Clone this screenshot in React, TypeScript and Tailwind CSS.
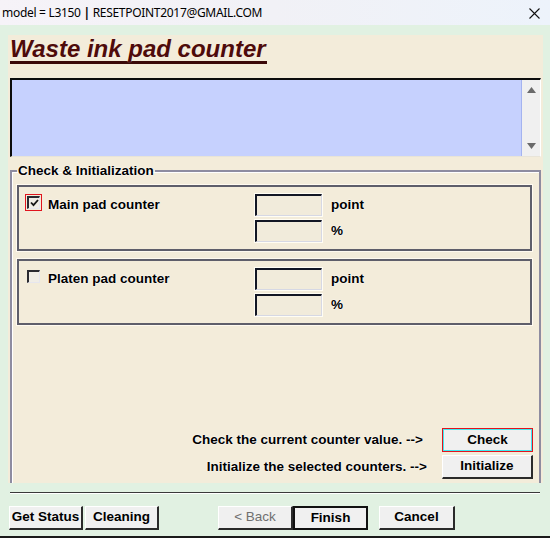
import type { ReactNode } from "react";

const glow = "[text-shadow:0_0_1px_#fff,0_0_2px_#fff]";

function TitleBar() {
  return (
    <div className="flex h-[25px] items-center justify-between bg-gradient-to-r from-[#f6f3f8] via-[#f1f1f6] to-[#edf3fb] pl-[2px] pr-[10px]">
      <span className="font-['Noto_Sans',sans-serif] text-[12px] leading-none tracking-[-0.3px] text-black">
        model = L3150 <b className="font-bold">|</b> RESETPOINT2017@GMAIL.COM
      </span>
      <svg width="11" height="11" viewBox="0 0 11 11" className="mt-[1px]">
        <path d="M0.5 0.5 L10.5 10.5 M10.5 0.5 L0.5 10.5" stroke="#111" strokeWidth="1.1" />
      </svg>
    </div>
  );
}

function Checkbox({ checked, focused }: { checked?: boolean; focused?: boolean }) {
  return (
    <div className={`flex h-[17px] w-[17px] items-center justify-center ${focused ? "border border-[#e0141e]" : "border border-transparent"}`}>
      <div className="flex h-[13px] w-[13px] items-center justify-center border-t-2 border-l-2 border-t-[#2a2a30] border-l-[#2a2a30] border-b border-r border-b-[#e6e6ee] border-r-[#e6e6ee] bg-[#f0ede6]">
        {checked && (
          <svg width="9" height="8" viewBox="0 0 9 8">
            <path d="M1 3.5 L3.5 6.2 L8 1" fill="none" stroke="#151515" strokeWidth="1.8" />
          </svg>
        )}
      </div>
    </div>
  );
}

function Field() {
  return (
    <div className="h-[22px] w-[67px] border-t-2 border-l-2 border-t-[#121624] border-l-[#121624] border-b border-r border-b-[#d6d8e4] border-r-[#d6d8e4] bg-[#f1ebdb] shadow-[0_0_0_1px_#fffdf4]" />
  );
}

function CounterBox({ label, checked, focused }: { label: string; checked?: boolean; focused?: boolean }) {
  return (
    <div className="ml-[5px] mr-[7px] flex h-[66px] border-2 border-[#5e5e6a] shadow-[0_0_0_1px_#fffaf0] pt-[7px]">
      <div className="flex w-[236px] items-start gap-[6px] pl-[6px]">
        <div className="mt-[0px]">
          <Checkbox checked={checked} focused={focused} />
        </div>
        <span className={`mt-[3px] text-[13.5px] font-bold leading-[16px] ${glow}`}>{label}</span>
      </div>
      <div className="flex flex-col gap-[4px]">
        <div className="flex items-center gap-[9px]">
          <Field />
          <span className={`text-[13.5px] font-bold ${glow}`}>point</span>
        </div>
        <div className="flex items-center gap-[9px]">
          <Field />
          <span className={`text-[13.5px] font-bold ${glow}`}>%</span>
        </div>
      </div>
    </div>
  );
}

function Button({
  children,
  width,
  variant = "normal",
}: {
  children: ReactNode;
  width: string;
  variant?: "normal" | "focus" | "default" | "disabled";
}) {
  const frame =
    variant === "focus"
      ? "border border-[#e0141e] shadow-[inset_1px_1px_0_#3fe8f0,inset_-1px_-1px_0_#3fe8f0]"
      : variant === "default"
        ? "border-2 border-[#111]"
        : "border-t border-l border-t-[#fff] border-l-[#fff] border-b-2 border-r-2 border-b-[#2a2a2a] border-r-[#2a2a2a]";
  return (
    <div
      className={`flex h-[24px] items-center justify-center bg-[#f0f0f0] text-[13.5px] font-bold ${width} ${frame} ${
        variant === "disabled" ? "font-normal text-[#6f6f6f]" : "text-black"
      }`}
    >
      {children}
    </div>
  );
}

export default function App() {
  return (
    <div className="flex h-[538px] w-[550px] flex-col overflow-hidden border-b-2 border-[#1a1a1a] bg-[#e1f1e2] font-['Liberation_Sans',Arial,sans-serif] text-black">
      <TitleBar />

      <div className="mx-[8px] mt-[10px] flex h-[448px] w-[535px] flex-col bg-[#f3ecda]">
        <div className="h-[43px] pl-[2px] pt-[2px]">
          <span className="inline-block border-b-[3px] border-[#3a0808] pr-[1px] text-[24px] font-bold italic leading-[24px] text-[#4e0b0b] [text-shadow:0_0_1px_#fff6e0]">
            Waste ink pad counter
          </span>
        </div>

        <div className="mx-[2px] flex h-[79px] border-t-2 border-l-2 border-t-[#0c0c0c] border-l-[#0c0c0c] border-b border-r border-b-[#e8e4d8] border-r-[#ffffff]">
          <div className="flex-1 border-r border-[#a4b3f0] bg-[#c6d1fe]" />
          <div className="flex w-[18px] flex-col items-center justify-between bg-[#f0f0f0] py-[7px]">
            <svg width="9" height="6" viewBox="0 0 9 6">
              <path d="M4.5 0 L9 6 L0 6 Z" fill="#6a6a6a" />
            </svg>
            <svg width="9" height="6" viewBox="0 0 9 6">
              <path d="M0 0 L9 0 L4.5 6 Z" fill="#6a6a6a" />
            </svg>
          </div>
        </div>

        <fieldset className="mx-[2px] mt-[6px] flex-1 border-2 border-b-0 border-[#8e8ca0] shadow-[inset_1px_1px_0_#fff]">
          <legend className={`ml-[5px] px-[1px] text-[13.5px] font-bold leading-[15px] ${glow}`}>
            Check &amp; Initialization
          </legend>
          <div className="mt-[7px] flex flex-col gap-[8px]">
            <CounterBox label="Main pad counter" checked focused />
            <CounterBox label="Platen pad counter" />
          </div>

          <div className="mt-[103px] mr-[6px] flex flex-col items-end gap-[3px]">
            <div className="flex items-center">
              <span className={`mr-[19px] text-[13.5px] font-bold ${glow}`}>Check the current counter value. --&gt;</span>
              <Button width="w-[91px]" variant="focus">
                Check
              </Button>
            </div>
            <div className="flex items-center">
              <span className={`mr-[15px] text-[13.5px] font-bold ${glow}`}>Initialize the selected counters. --&gt;</span>
              <Button width="w-[91px]">Initialize</Button>
            </div>
          </div>
        </fieldset>
      </div>

      <div className="mx-[10px] mt-[9px] h-[2px] border-t border-b border-t-[#3a3a3a] border-b-[#ffffff]" />

      <div className="mt-[12px] flex pl-[9px]">
        <Button width="w-[74px]">Get Status</Button>
        <div className="ml-[2px]">
          <Button width="w-[74px]">Cleaning</Button>
        </div>
        <div className="ml-[59px]">
          <Button width="w-[75px]" variant="disabled">
            &lt; Back
          </Button>
        </div>
        <Button width="w-[75px]" variant="default">
          Finish
        </Button>
        <div className="ml-[11px]">
          <Button width="w-[76px]">Cancel</Button>
        </div>
      </div>
    </div>
  );
}
